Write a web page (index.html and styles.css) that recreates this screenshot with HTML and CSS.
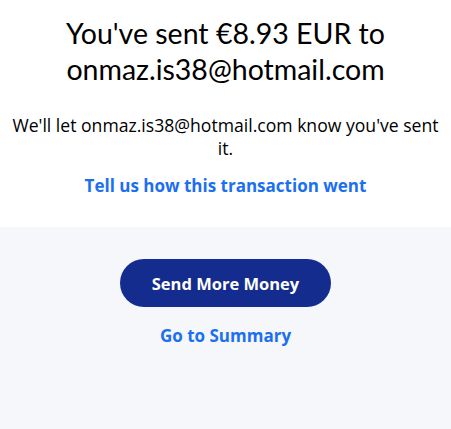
FILE: index.html
```html
<!DOCTYPE html>
<html lang="en">
<head>
<meta charset="utf-8">
<title>Sent</title>
<link rel="stylesheet" href="styles.css">
</head>
<body>
<main class="page">
  <section class="top">
    <h1 class="headline">You've sent €8.93 EUR to onmaz.is38@hotmail.com</h1>
    <p class="notice">We'll let onmaz.is38@hotmail.com know you've sent it.</p>
    <a class="link feedback" href="#">Tell us how this transaction went</a>
  </section>
  <section class="bottom">
    <button class="primary" type="button">Send More Money</button>
    <a class="link summary" href="#">Go to Summary</a>
  </section>
</main>
</body>
</html>
```
FILE: styles.css
```css
html, body {
  margin: 0;
  padding: 0;
}
body {
  font-family: "Open Sans", Lato, sans-serif;
  color: #000;
  background: #f5f7fa;
}
.page {
  display: flex;
  flex-direction: column;
  min-height: 429px;
}
.top {
  background: #fff;
  display: flex;
  flex-direction: column;
  align-items: center;
  text-align: center;
  padding: 15px 8px 0;
  height: 212px;
}
.headline {
  margin: 0;
  font-family: Lato, sans-serif;
  font-weight: 400;
  font-size: 28.5px;
  line-height: 36px;
  max-width: 340px;
}
.notice {
  margin: 27px 0 0;
  font-size: 17.6px;
  line-height: 23px;
}
.link {
  color: #1b6ff0;
  font-weight: 700;
  text-decoration: none;
  font-size: 17px;
  line-height: 23px;
}
.feedback {
  margin-top: 14px;
}
.bottom {
  flex: 1;
  display: flex;
  flex-direction: column;
  align-items: center;
  padding-top: 32px;
}
.primary {
  width: 211px;
  height: 48px;
  border: 0;
  border-radius: 24px;
  background: #142c8e;
  color: #fff;
  font-family: inherit;
  font-size: 16.5px;
  font-weight: 700;
}
.summary {
  margin-top: 17px;
}
```
